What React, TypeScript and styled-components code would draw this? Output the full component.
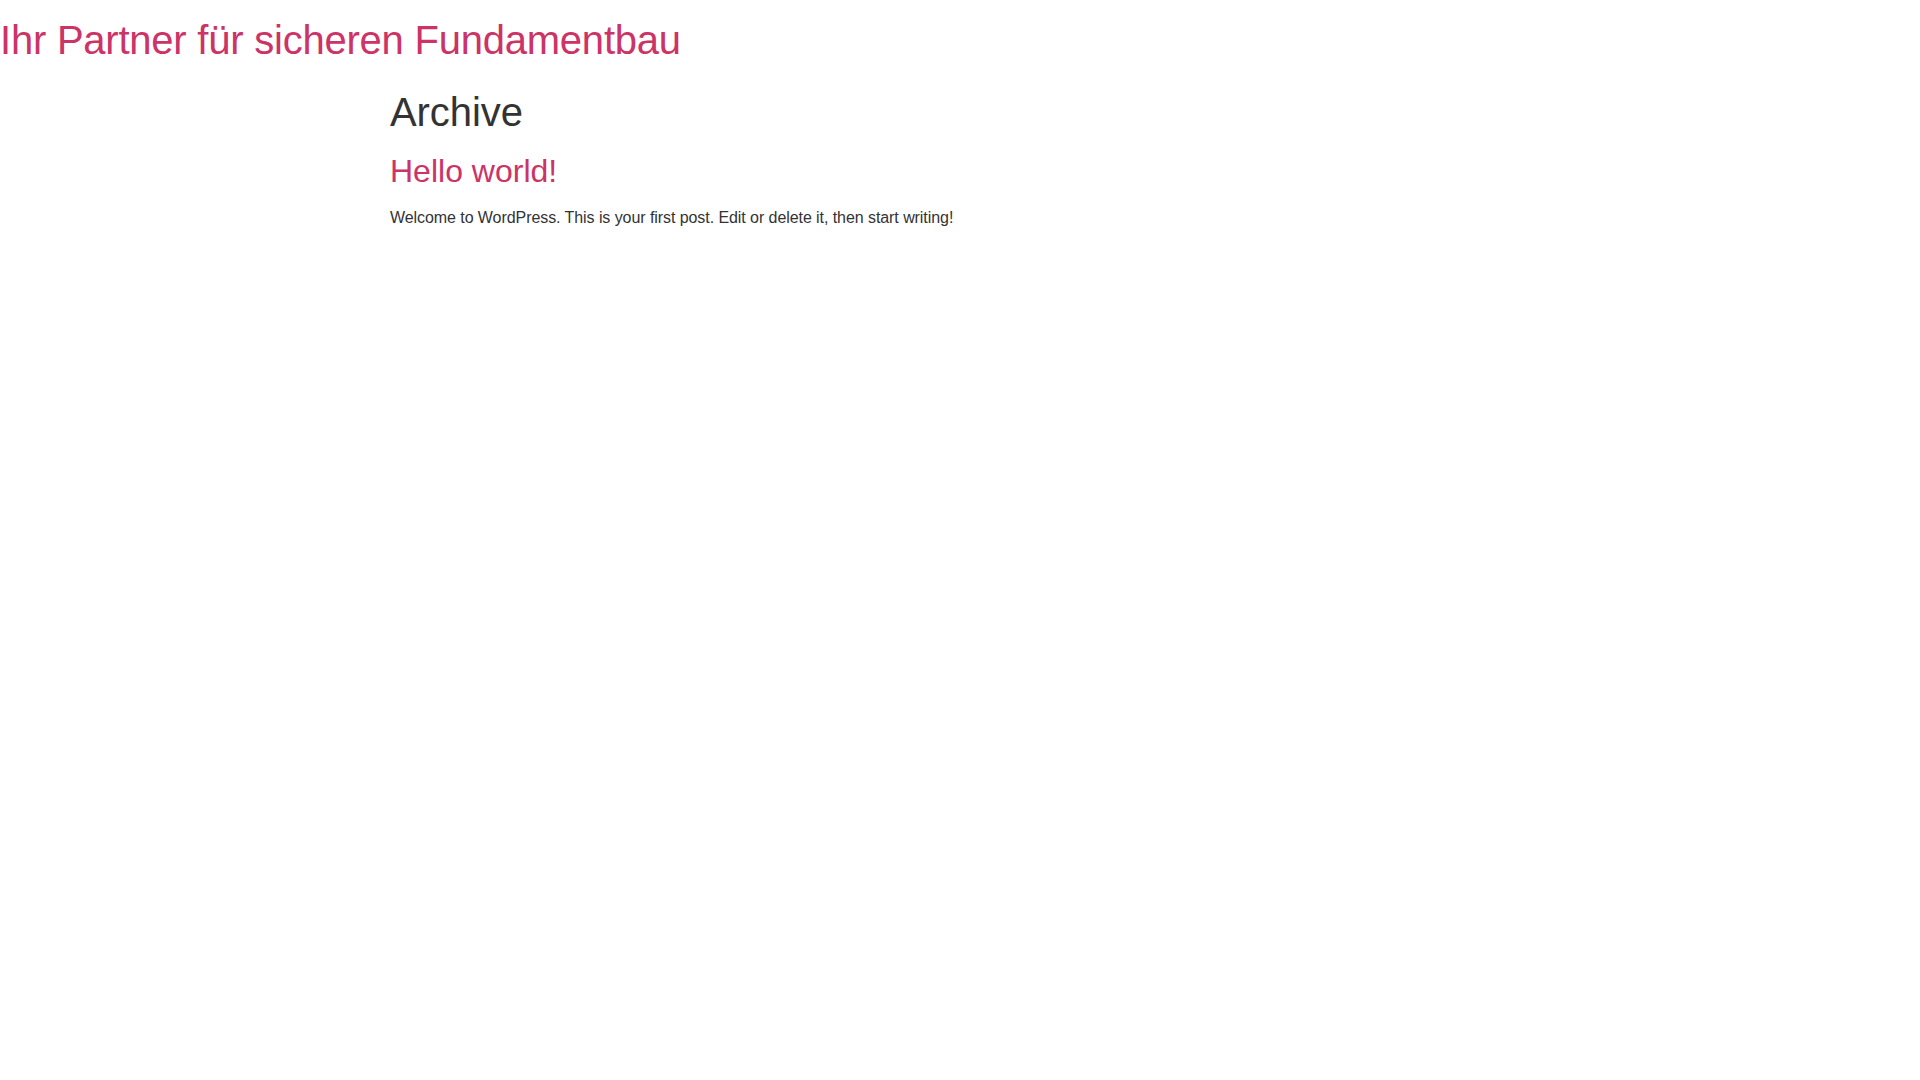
import React from 'react';
import styled, { createGlobalStyle } from 'styled-components';

const GlobalStyle = createGlobalStyle`
  html, body {
    margin: 0;
    padding: 0;
    background-color: #fff;
  }

  body {
    font-family: "Liberation Sans", Arial, Helvetica, sans-serif;
    font-size: 1rem;
    font-weight: 400;
    line-height: 1.5;
    color: #333;
    // the reference glyph advances run a touch narrower
    letter-spacing: -0.0043em;
  }
`

const SiteHeader = styled.header`
  display: flex;
  padding: 1rem 0;
`

const SiteTitle = styled.h1`
  margin: 0;
  font-size: 2.5rem;
  font-weight: 500;
  line-height: 1.2;
  letter-spacing: -0.0057em;

  a {
    color: #c36;
    text-decoration: none;
  }
`

const Main = styled.main`
  width: 100%;
  max-width: 1140px;
  margin: 0 auto;
`

const PageTitle = styled.h1`
  margin: 0.5rem 0 1rem;
  font-size: 2.5rem;
  font-weight: 500;
  line-height: 1.2;
  color: #333;
`

const Post = styled.article`
  margin: 0;
`

const PostTitle = styled.h2`
  margin: 0.5rem 0 1rem;
  font-size: 2rem;
  font-weight: 500;
  line-height: 1.2;
  letter-spacing: 0;

  a {
    color: #c36;
    text-decoration: none;
  }
`

const Excerpt = styled.p`
  margin: 0 0 0.9rem;
`

export default function App() {
  return (
    <>
      <GlobalStyle />
      <SiteHeader>
        <SiteTitle>
          <a href="#">Ihr Partner für sicheren Fundamentbau</a>
        </SiteTitle>
      </SiteHeader>
      <Main>
        <PageTitle>Archive</PageTitle>
        <Post>
          <PostTitle>
            <a href="#">Hello world!</a>
          </PostTitle>
          <Excerpt>
            Welcome to WordPress. This is your first post. Edit or delete it, then start writing!
          </Excerpt>
        </Post>
      </Main>
    </>
  )
}
